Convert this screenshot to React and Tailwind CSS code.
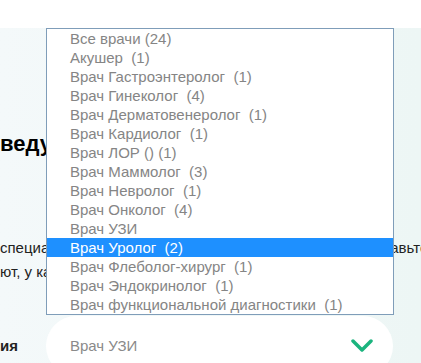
import React from 'react';

const doctors = [
    'Все врачи (24)',
    'Акушер  (1)',
    'Врач Гастроэнтеролог  (1)',
    'Врач Гинеколог  (4)',
    'Врач Дерматовенеролог  (1)',
    'Врач Кардиолог  (1)',
    'Врач ЛОР () (1)',
    'Врач Маммолог  (3)',
    'Врач Невролог  (1)',
    'Врач Онколог  (4)',
    'Врач УЗИ',
    'Врач Уролог  (2)',
    'Врач Флеболог-хирург  (1)',
    'Врач Эндокринолог  (1)',
    'Врач функциональной диагностики  (1)',
];

const App = () => {
    return (
        <div className="relative w-[421px] h-[363px] overflow-hidden bg-white font-['Liberation_Sans',Arial,sans-serif]">
            {/* Top white bar */}
            <div className="h-[28px] bg-white" />

            {/* Section */}
            <div className="h-[335px] bg-gradient-to-r from-[#f4f9fa] to-[#edf6f5] overflow-hidden">
                <h2 className="mt-[102px] text-[22px] leading-[27px] font-bold text-black whitespace-nowrap">
                    ведущих врачей
                </h2>

                <div className="mt-[79px] text-[15px] leading-[24px] text-[#222] whitespace-nowrap">
                    <p>специалистов нашей клиники пожалуйста выберите оставьте заявку</p>
                    <p>ют, у какого врача есть время</p>
                </div>

                {/* Filter row */}
                <div className="mt-[32px] flex items-center">
                    <span className="w-[46px] text-[15px] font-bold text-[#222]">ия</span>
                    <div className="w-[347px] h-[60px] shrink-0 rounded-full bg-white flex items-center justify-between pl-[24px] pr-[20px]">
                        <span className="text-[15px] text-[#8a8a8a]">Врач УЗИ</span>
                        <svg width="22" height="16" viewBox="0 0 22 16" fill="none">
                            <polyline points="2,3 11,12 20,3" stroke="#1bb47e" strokeWidth="3.5" strokeLinecap="round" strokeLinejoin="round" />
                        </svg>
                    </div>
                </div>
            </div>

            {/* Open dropdown list */}
            <ul className="absolute left-[46px] top-[28px] w-[348px] border border-[#7f9db9] bg-white">
                {doctors.map((d, i) => (
                    <li
                        key={d}
                        className={
                            i === 11
                                ? 'h-[19px] leading-[19px] pl-[23px] text-[15px] whitespace-pre bg-[#1e90ff] text-white'
                                : 'h-[19px] leading-[19px] pl-[23px] text-[15px] whitespace-pre text-[#858585]'
                        }
                    >
                        {d}
                    </li>
                ))}
            </ul>
        </div>
    );
};

export default App;
